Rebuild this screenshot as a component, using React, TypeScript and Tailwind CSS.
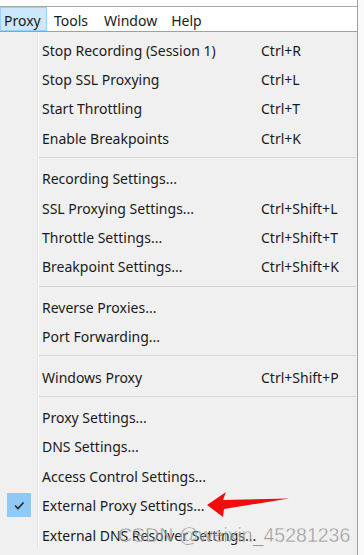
import React from "react";

type Item = { label: string; shortcut?: string; checked?: boolean } | "sep";

const items: Item[] = [
  { label: "Stop Recording (Session 1)", shortcut: "Ctrl+R" },
  { label: "Stop SSL Proxying", shortcut: "Ctrl+L" },
  { label: "Start Throttling", shortcut: "Ctrl+T" },
  { label: "Enable Breakpoints", shortcut: "Ctrl+K" },
  "sep",
  { label: "Recording Settings..." },
  { label: "SSL Proxying Settings...", shortcut: "Ctrl+Shift+L" },
  { label: "Throttle Settings...", shortcut: "Ctrl+Shift+T" },
  { label: "Breakpoint Settings...", shortcut: "Ctrl+Shift+K" },
  "sep",
  { label: "Reverse Proxies..." },
  { label: "Port Forwarding..." },
  "sep",
  { label: "Windows Proxy", shortcut: "Ctrl+Shift+P" },
  "sep",
  { label: "Proxy Settings..." },
  { label: "DNS Settings..." },
  { label: "Access Control Settings..." },
  { label: "External Proxy Settings...", checked: true },
  { label: "External DNS Resolver Settings..." },
];

function Gutter({ children }: { children?: React.ReactNode }) {
  return (
    <div className="w-[38px] h-full shrink-0 flex items-center border-r border-[#e4e4e4] shadow-[1px_0_0_#fbfbfb]">
      {children}
    </div>
  );
}

export default function App() {
  return (
    <div
      className="w-[364px] h-[555px] bg-white relative overflow-hidden flex text-[14px] text-[#1a1a1a]"
      style={{ fontFamily: '"Noto Sans", "Open Sans", sans-serif' }}
    >
      <div className="w-[357px] flex flex-col shrink-0">
        <div className="h-[6px] bg-[#fdfdfd] border-b border-[#a9a9a9] box-content" />
        <div className="h-[24px] bg-white flex items-center border-b border-[#a0a0a0] box-content leading-none">
          <div className="w-[47px] h-[24px] bg-[#cce8ff] border border-[#99d1ff] flex items-center pl-[3px] pt-[3px]">
            Proxy
          </div>
          <span className="ml-[7px] pt-[3px]">Tools</span>
          <span className="ml-[16px] pt-[3px]">Window</span>
          <span className="ml-[14px] pt-[3px]">Help</span>
        </div>
        <div className="flex-1 bg-[#f0f0f0] flex flex-col">
          <div className="h-[2.5px] flex">
            <Gutter />
          </div>
          {items.map((it, i) =>
            it === "sep" ? (
              <div key={i} className="h-[11px] flex">
                <Gutter />
                <div className="flex-1 ml-[1px] mr-[1px] pt-[5px]">
                  <div className="h-px bg-[#d5d5d5]" />
                </div>
              </div>
            ) : (
              <div key={i} className="h-[29.4px] flex items-center">
                <Gutter>
                  {it.checked && (
                    <div className="ml-[7px] w-[24px] h-[24px] bg-[#90c8f6] flex items-center justify-center">
                      <svg width="24" height="24" viewBox="0 0 24 24">
                        <polyline
                          points="8,12.5 11,15.5 16.5,9.5"
                          fill="none"
                          stroke="#2b2b2b"
                          strokeWidth="1.7"
                        />
                      </svg>
                    </div>
                  )}
                </Gutter>
                <div className="w-[223px] pl-[4px] pt-[3px] whitespace-nowrap leading-none">{it.label}</div>
                <div className="pt-[3px] whitespace-nowrap leading-none">{it.shortcut}</div>
              </div>
            )
          )}
        </div>
      </div>
      <div className="flex-1 border-l border-[#a0a0a0] bg-[#fafafa]" />

      <svg
        className="absolute left-0 top-0 pointer-events-none"
        width="364"
        height="555"
        viewBox="0 0 364 555"
      >
        <polygon
          points="207,505 226,492 223,500 289,498.5 224,509 223,517"
          fill="#f20d0d"
        />
      </svg>

      <div
        className="absolute left-[118px] top-[522px] text-[19.5px] leading-[26px] text-[#7a7a7a] opacity-70 whitespace-nowrap pointer-events-none"
        style={{ fontFamily: '"Liberation Sans", Arial, sans-serif', WebkitTextStroke: "0.3px #ffffff" }}
      >
        CSDN @weixin_45281236
      </div>
    </div>
  );
}
